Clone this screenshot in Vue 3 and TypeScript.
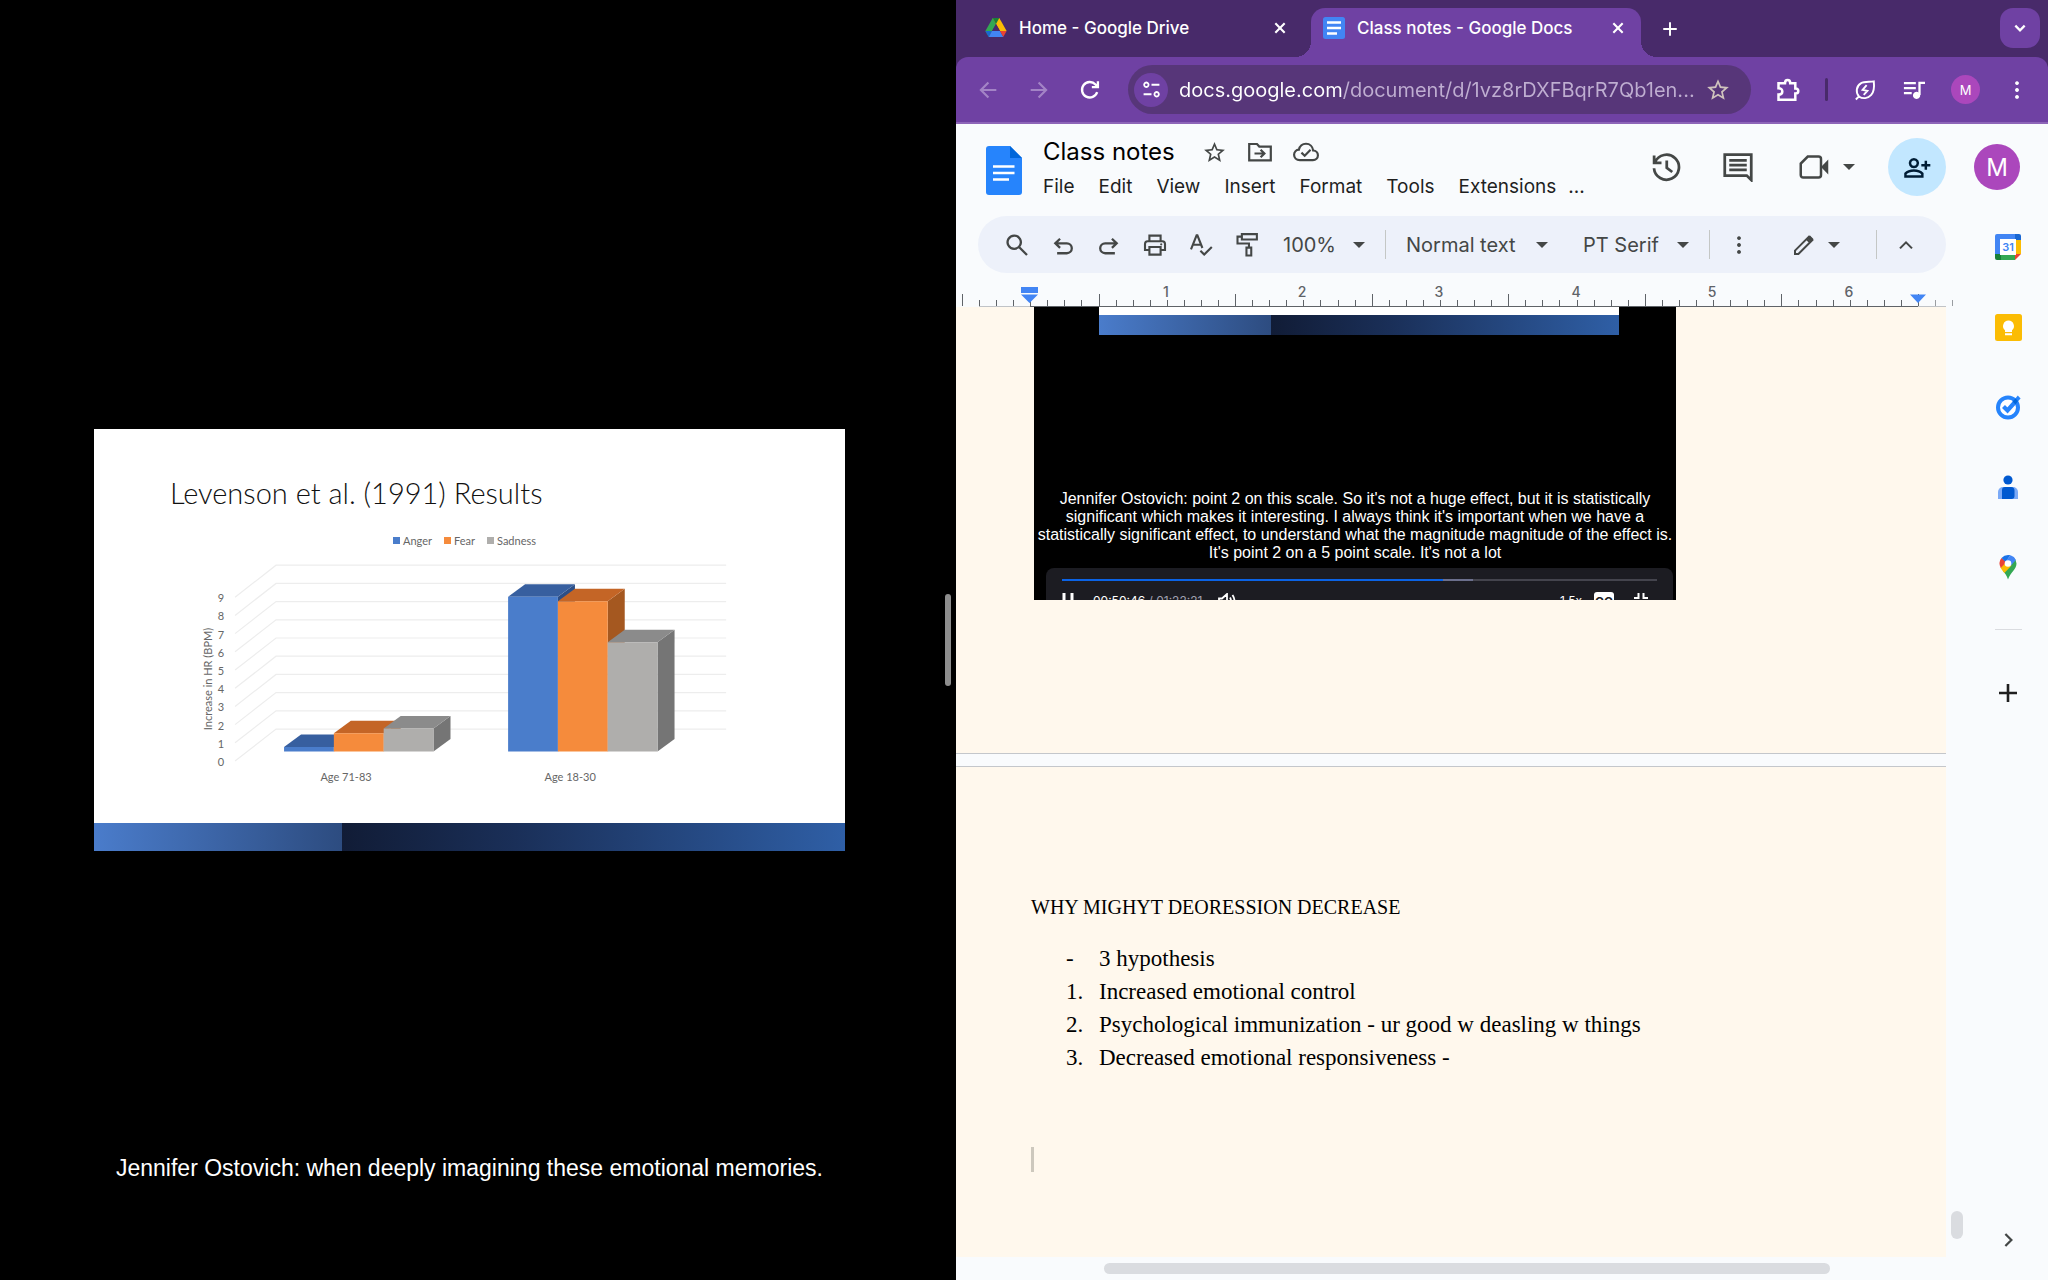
<script setup lang="ts">
import { h } from 'vue'

interface Glyph {
  stroke?: string
  fill?: string
  width?: number
}

const glyphs: Record<string, Glyph> = {
  close: { stroke: 'M4 4 20 20M20 4 4 20', width: 3.6 },
  plus: { stroke: 'M12 3V21M3 12H21', width: 2.6 },
  chevronDown: { stroke: 'M5 8.5 12 15.5 19 8.5', width: 3.4 },
  chevronUp: { stroke: 'M4 16.5 12 8.5 20 16.5', width: 2.8 },
  chevronRight: { stroke: 'M8.5 4 16.5 12 8.5 20', width: 3 },
  back: { stroke: 'M22 12H4M12.5 3 3.5 12l9 9', width: 2.6 },
  forward: { stroke: 'M2 12H20M11.5 3 20.5 12l-9 9', width: 2.6 },
  reload: { stroke: 'M20.6 14.5A9.3 9.3 0 1 1 18.6 5.4L21 8M21.5 1.5V8.6H14.2', width: 2.8 },
  tune: {
    stroke: 'M12 6H22M2 18H12M5.5 3.2a2.8 2.8 0 1 0 .01 0zM18.5 15.2a2.8 2.8 0 1 0 .01 0z',
    width: 2.3,
  },
  star: {
    fill: 'M22 9.24l-7.19-.62L12 2 9.19 8.63 2 9.24l5.46 4.73L5.82 21 12 17.27 18.18 21l-1.63-7.03L22 9.24zM12 15.4l-3.76 2.27 1-4.28-3.32-2.88 4.38-.38L12 6.1l1.71 4.04 4.38.38-3.32 2.88 1 4.28L12 15.4z',
  },
  puzzle: {
    stroke:
      'M2.5 5.2H9C9 .9 14.2 .9 14.2 5.2H19.3V10.4C23.3 10.4 23.3 15.6 19.3 15.6V21.8H2.5V16.6C7.6 16.6 7.6 10.2 2.5 10.2Z',
    width: 2.5,
  },
  leaf: {
    stroke:
      'M2 22.3 5.4 19C1.4 14.6 2.6 7.6 7.4 4.7 11.4 2.3 16.4 3.4 21.6 2.6 22.2 8 22.4 13.4 18.8 17.4 15.2 21.4 9.6 22 5.4 19M13.8 6.8 9.4 11.8 14.6 13 10.6 17.4',
    width: 2.1,
  },
  queue: {
    stroke: 'M1 4.5H14M1 10H14M1 15.5H9.5M18 17.5V4.2H24',
    fill: 'M14.8 14a3.9 3.9 0 1 0 .01 0z',
    width: 2.5,
  },
  dots: { fill: 'M12 1.4a2.3 2.3 0 1 0 .01 0zM12 9.7a2.3 2.3 0 1 0 .01 0zM12 18a2.3 2.3 0 1 0 .01 0z' },
  folder: { stroke: 'M1.2 4H9L11.3 6.6H22.8V20.4H1.2ZM6.5 13.5H16M12.6 9.8 16.4 13.5 12.6 17.2', width: 2.2 },
  cloud: {
    stroke:
      'M6.4 19.5C2.9 19.5 1 17.2 1 14.6 1 12 3 10 5.5 9.8 6.3 6.4 8.8 4.4 12 4.4 15.6 4.4 18.2 7 18.6 10.6 21.2 10.8 23 12.7 23 15 23 17.6 21 19.5 18.4 19.5ZM7.8 12.6 10.8 15.5 16.2 10',
    width: 2,
  },
  history: { stroke: 'M2.5 2.8V8.6H8.4M3.2 8.2A10 10 0 1 1 2.4 13M12.6 6.8V12.6L17 16', width: 2.2 },
  comment: { stroke: 'M1.4 2H22.6V22.4L19 18.9H1.4ZM5 6.6H19M5 10.4H19M5 14.2H19', width: 2.2 },
  video: {
    stroke: 'M7 3.6H15.6C16.8 3.6 17.6 4.4 17.6 5.6V18.4C17.6 19.6 16.8 20.4 15.6 20.4H3.4C2.2 20.4 1.4 19.6 1.4 18.4V9.2Z',
    fill: 'M17.6 12 23.4 6V18Z',
    width: 2,
  },
  personAdd: {
    stroke: 'M8.8 4.6a3.5 3.5 0 1 0 .01 0zM1.3 20V17.4C3 15.4 6 14.6 8.8 14.6 11.6 14.6 14.6 15.4 16.3 17.4V20ZM19.4 6V14M15.4 10H23.4',
    width: 2.2,
  },
  search: { stroke: 'M9.2 2.6a6.6 6.6 0 1 0 .01 0zM14 14 22 22', width: 2.3 },
  undo: { stroke: 'M8.8 5.2 3.6 10.2 8.8 15.2M4 10.2H16.2A5.4 5.4 0 0 1 16.2 21H5.6', width: 2.5 },
  redo: { stroke: 'M15.2 5.2 20.4 10.2 15.2 15.2M20 10.2H7.8A5.4 5.4 0 0 0 7.8 21H18.4', width: 2.5 },
  print: {
    stroke: 'M6.4 8V2.6H17.6V8M6.4 17H2V11C2 9.3 3 8.2 4.6 8.2H19.4C21 8.2 22 9.3 22 11V17H17.6M6.4 14H17.6V21.6H6.4Z',
    fill: 'M18.2 10.2a1.1 1.1 0 1 0 .01 0z',
    width: 2.1,
  },
  spell: { stroke: 'M2 16.4 7.6 2.4H8.4L13.4 15M4.2 11.8H11.8M11.4 17.8 15.2 21.6 22.8 14', width: 2.1 },
  paint: { stroke: 'M6.6 2H21V7.2H6.6ZM6.6 4.4H2.4V11H13.4V15M11 15H15.6V22.6H11Z', width: 2 },
  pencil: { stroke: 'M3 21V17.6L17 3.6 20.4 7 6.4 21ZM14.6 6 18 9.4', fill: 'M15 5.6 18 2.6 21.4 6 18.4 9Z', width: 2 },
}

const Icon = (props: { name: string; size?: number }) => {
  const g = glyphs[props.name]
  const size = props.size ?? 24
  const parts = []
  if (g.stroke) {
    parts.push(h('path', { d: g.stroke, fill: 'none', stroke: 'currentColor', 'stroke-width': g.width }))
  }
  if (g.fill) parts.push(h('path', { d: g.fill, fill: 'currentColor' }))
  return h('svg', { viewBox: '0 0 24 24', width: size, height: size, 'aria-hidden': 'true' }, parts)
}
Icon.props = ['name', 'size']

const Caret = () =>
  h('svg', { viewBox: '0 0 12 6', width: 12, height: 6, 'aria-hidden': 'true' }, [
    h('path', { d: 'M0 0H12L6 6Z', fill: 'currentColor' }),
  ])

const menus = ['File', 'Edit', 'View', 'Insert', 'Format', 'Tools', 'Extensions']
const tools = [
  { icon: 'search', label: 'Search the menus', size: 24 },
  { icon: 'undo', label: 'Undo', size: 22 },
  { icon: 'redo', label: 'Redo', size: 22 },
  { icon: 'print', label: 'Print', size: 24 },
  { icon: 'spell', label: 'Spelling and grammar check', size: 24 },
  { icon: 'paint', label: 'Paint format', size: 25 },
]

// Ruler: eight ticks to the inch, a tall one at each half inch.
const eighth = 17.07
const ticks = Array.from({ length: 59 }, (_, i) => ({
  x: Math.round(6 + i * eighth),
  tall: i % 8 === 0,
  faint: i > 56,
}))
const inches = [1, 2, 3, 4, 5, 6].map((n) => ({ n, x: Math.round(5 + (n * 8 + 4) * eighth) }))

// Bar chart
const series = [
  { name: 'Anger', front: '#4a7dcb', top: '#375f9f', side: '#2c4e86' },
  { name: 'Fear', front: '#f58b3c', top: '#c46526', side: '#a55820' },
  { name: 'Sadness', front: '#afaeac', top: '#8b8b8b', side: '#757575' },
]
const groups = [
  { label: 'Age 71-83', x: 190, values: [0.25, 1, 1.26] },
  { label: 'Age 18-30', x: 414, values: [8.5, 8.25, 6] },
]
const unit = 18.2
const barWidth = 49.8
const base = 198.5
const depth = { x: 17, y: 12.5 }
const levels = [9, 8, 7, 6, 5, 4, 3, 2, 1, 0].map((value) => ({ value, y: 176 - value * unit }))
const bars = groups.flatMap((g) =>
  g.values.map((v, i) => {
    const x = g.x + i * barWidth
    const y = base - v * unit
    const r = x + barWidth
    return {
      ...series[i],
      frontPath: `M${x} ${y}H${r}V${base}H${x}Z`,
      topPath: `M${x} ${y}l${depth.x} ${-depth.y}h${barWidth}L${r} ${y}Z`,
      sidePath: `M${r} ${y}l${depth.x} ${-depth.y}V${base - depth.y}L${r} ${base}Z`,
    }
  }),
)

const notes = [
  { mark: '-', text: '3 hypothesis' },
  { mark: '1.', text: 'Increased emotional control' },
  { mark: '2.', text: 'Psychological immunization - ur good w deasling w things' },
  { mark: '3.', text: 'Decreased emotional responsiveness -' },
]
</script>

<template>
  <div class="screen">
    <section class="lecture" aria-label="Lecture video">
      <div class="stage">
        <article class="slide">
          <h1>Levenson et al. (1991) Results</h1>
          <ul class="legend">
            <li v-for="s in series" :key="s.name">
              <i :style="{ background: s.front }"></i>{{ s.name }}
            </li>
          </ul>
          <svg class="chart" viewBox="0 0 751 270" role="img" aria-label="Increase in heart rate by age group">
            <path
              v-for="l in levels"
              :key="l.value"
              :d="`M141 ${l.y + 32}L182 ${l.y}H632`"
              fill="none"
              stroke="#ededed"
              stroke-width="1.2"
            />
            <text v-for="l in levels" :key="'t' + l.value" x="127" :y="l.y + 37" text-anchor="middle">{{ l.value }}</text>
            <text class="axis" transform="translate(118 126) rotate(-90)" text-anchor="middle">Increase in HR (BPM)</text>
            <g v-for="(b, i) in bars" :key="i">
              <path :d="b.sidePath" :fill="b.side" />
              <path :d="b.topPath" :fill="b.top" />
              <path :d="b.frontPath" :fill="b.front" />
            </g>
            <text v-for="g in groups" :key="g.label" :x="g.x + 62" y="228" text-anchor="middle">{{ g.label }}</text>
          </svg>
          <div class="band"></div>
        </article>
        <p class="subtitle">Jennifer Ostovich: when deeply imagining these emotional memories.</p>
      </div>
      <div class="splitter"><span></span></div>
    </section>

    <section class="browser">
      <div class="tabs">
        <div class="tab">
          <svg viewBox="0 0 24 22" width="22" height="20" aria-hidden="true">
            <path d="M8.4 0H15.6L12 6.4Z" fill="#188038" />
            <path d="M8.4 0 .3 14.4 4 21 12 6.6Z" fill="#34a853" />
            <path d="M15.6 0 23.7 14.4H16.4L8.4 0Z" fill="#fbbc04" />
            <path d="M8.4 0 12 6.6 15.6 0Z" fill="#188038" />
            <path d="M.3 14.4H7.6L4 21Z" fill="#1967d2" />
            <path d="M7.6 14.4H16.4L20 21H4Z" fill="#4285f4" />
            <path d="M16.4 14.4H23.7L20 21Z" fill="#ea4335" />
            <path d="M12 6.6 16.4 14.4H7.6Z" fill="#482a6a" />
          </svg>
          <span class="tab-name">Home - Google Drive</span>
          <button aria-label="Close tab"><Icon name="close" :size="14" /></button>
        </div>
        <div class="tab active">
          <svg viewBox="0 0 22 22" width="22" height="22" aria-hidden="true">
            <rect width="22" height="22" rx="2.5" fill="#4285f4" />
            <path d="M4 5.5H18M4 11H18M4 16.5H14" stroke="#fff" stroke-width="2.6" />
          </svg>
          <span class="tab-name">Class notes - Google Docs</span>
          <button aria-label="Close tab"><Icon name="close" :size="14" /></button>
        </div>
        <button class="new-tab" aria-label="New tab"><Icon name="plus" :size="18" /></button>
        <button class="tab-search" aria-label="Search tabs"><Icon name="chevronDown" :size="16" /></button>
      </div>

      <div class="nav">
        <button class="dim" aria-label="Back"><Icon name="back" :size="20" /></button>
        <button class="dim" aria-label="Forward"><Icon name="forward" :size="20" /></button>
        <button aria-label="Reload"><Icon name="reload" :size="20" /></button>
        <div class="omnibox">
          <button class="site-info" aria-label="Site information"><Icon name="tune" :size="19" /></button>
          <input type="text" aria-label="Address" value="docs.google.com/document/d/1vz8rDXFBqrR7Qb1en..." />
          <button class="bookmark" aria-label="Bookmark this tab"><Icon name="star" :size="26" /></button>
        </div>
        <button class="action" aria-label="Extensions"><Icon name="puzzle" /></button>
        <span class="nav-rule"></span>
        <button class="action" aria-label="Energy saver"><Icon name="leaf" :size="22" /></button>
        <button class="action" aria-label="Media controls"><Icon name="queue" :size="22" /></button>
        <button class="profile" aria-label="Profile">M</button>
        <button class="action" aria-label="More"><Icon name="dots" :size="20" /></button>
      </div>

      <div class="docs">
        <header class="docs-head">
          <a href="#" class="logo" aria-label="Docs home">
            <svg viewBox="0 0 36 49" width="36" height="49">
              <path d="M3 0H24L36 12V46a3 3 0 0 1-3 3H3a3 3 0 0 1-3-3V3a3 3 0 0 1 3-3Z" fill="#2684fc" />
              <path d="M24 0 36 12H24Z" fill="#0066da" />
              <path d="M7 20.5H28.5M7 27H28.5M7 33.5H23" stroke="#fff" stroke-width="2.6" />
            </svg>
          </a>
          <div class="head-main">
            <div class="title-row">
              <input class="doc-title" type="text" aria-label="Document title" value="Class notes" />
              <button aria-label="Star"><Icon name="star" :size="25" /></button>
              <button aria-label="Move"><Icon name="folder" :size="24" /></button>
              <button aria-label="Document status"><Icon name="cloud" :size="26" /></button>
            </div>
            <nav class="menus">
              <button v-for="m in menus" :key="m">{{ m }}</button>
              <button class="more">...</button>
            </nav>
          </div>
          <div class="head-actions">
            <button aria-label="Version history"><Icon name="history" :size="30" /></button>
            <button aria-label="Comments"><Icon name="comment" :size="30" /></button>
            <button class="meet" aria-label="Join a call"><Icon name="video" :size="30" /><Caret /></button>
            <button class="share" aria-label="Share"><Icon name="personAdd" :size="27" /></button>
            <button class="account" aria-label="Account">M</button>
          </div>
        </header>

        <div class="workspace">
          <div class="editor">
            <div class="toolbar" role="toolbar">
              <button v-for="t in tools" :key="t.icon" class="tool" :aria-label="t.label">
                <Icon :name="t.icon" :size="t.size" />
              </button>
              <label class="drop zoom"><select aria-label="Zoom"><option>100%</option></select><Caret /></label>
              <span class="rule"></span>
              <label class="drop para"><select aria-label="Styles"><option>Normal text</option></select><Caret /></label>
              <label class="drop font"><select aria-label="Font"><option>PT Serif</option></select><Caret /></label>
              <span class="rule"></span>
              <button class="slim" aria-label="More tools"><Icon name="dots" :size="20" /></button>
              <button class="mode" aria-label="Editing mode"><Icon name="pencil" :size="24" /><Caret /></button>
              <span class="rule"></span>
              <button class="slim" aria-label="Hide the menus"><Icon name="chevronUp" :size="18" /></button>
            </div>

            <svg class="ruler" width="100%" height="34" aria-hidden="true">
              <path d="M23 33.5H990" stroke="#c0c3c7" />
              <path d="M74 33.5H962" stroke="#5f6368" />
              <rect
                v-for="t in ticks"
                :key="t.x"
                :x="t.x"
                :y="t.tall ? 21 : 27"
                width="1"
                :height="t.tall ? 12 : 6"
                :fill="t.faint ? '#9a9da1' : '#5f6368'"
              />
              <text v-for="i in inches" :key="i.n" :x="i.x" y="24" text-anchor="middle">{{ i.n }}</text>
              <path d="M65 14H82V20H65ZM65 21.5H82L73.5 30ZM954 21.5H970L962 30Z" fill="#4285f4" />
            </svg>

            <div class="canvas">
              <div class="pages">
                <div class="page first">
                  <figure>
                    <div class="clip-slide"><div class="band"></div></div>
                    <figcaption>
                      Jennifer Ostovich: point 2 on this scale. So it's not a huge effect, but it is statistically<br />
                      significant which makes it interesting. I always think it's important when we have a<br />
                      statistically significant effect, to understand what the magnitude magnitude of the effect is.<br />
                      It's point 2 on a 5 point scale. It's not a lot
                    </figcaption>
                    <div class="player">
                      <div class="progress"><span class="played"></span><span class="loaded"></span></div>
                      <div class="controls">
                        <svg viewBox="0 0 12 16" width="12" height="16"><path d="M2 0V16M10 0V16" stroke="#fff" stroke-width="3" /></svg>
                        <span class="time">00:50:46 <em>/ 01:22:21</em></span>
                        <svg class="volume" viewBox="0 0 18 16" width="18" height="16">
                          <path d="M1 5.5H4L9 1V15L4 10.5H1ZM12 4.5Q14 8 12 11.5M14.5 2Q18.5 8 14.5 14" fill="none" stroke="#fff" stroke-width="1.8" />
                        </svg>
                        <span class="speed">1.5x</span>
                        <span class="cc">CC</span>
                        <svg viewBox="0 0 14 16" width="14" height="16"><path d="M0 5H4.5V0M14 5H9.5V0M0 11H4.5V16M14 11H9.5V16" fill="none" stroke="#fff" stroke-width="2" /></svg>
                      </div>
                    </div>
                  </figure>
                </div>
                <div class="page second">
                  <p>WHY MIGHYT DEORESSION DECREASE</p>
                  <ul>
                    <li v-for="n in notes" :key="n.mark"><span>{{ n.mark }}</span>{{ n.text }}</li>
                  </ul>
                  <div class="cursor"></div>
                </div>
              </div>
              <div class="track-y"><span></span></div>
            </div>
            <div class="track-x"><span></span></div>
          </div>

          <aside class="rail">
            <button aria-label="Calendar">
              <svg viewBox="0 0 26 26" width="26" height="26">
                <path d="M2 0H20V6H6V20H0V2A2 2 0 0 1 2 0Z" fill="#4285f4" />
                <path d="M20 0H24A2 2 0 0 1 26 2V6H20Z" fill="#1967d2" />
                <path d="M20 6H26V20H20Z" fill="#fbbc04" />
                <path d="M6 20H20V26H6Z" fill="#34a853" />
                <path d="M0 20H6V26H2A2 2 0 0 1 0 24Z" fill="#188038" />
                <path d="M20 20H26L20 26Z" fill="#ea4335" />
                <rect x="5" y="5" width="16" height="16" fill="#fff" />
                <text x="13" y="17" text-anchor="middle" class="day">31</text>
              </svg>
            </button>
            <button aria-label="Keep">
              <svg viewBox="0 0 27 27" width="27" height="27">
                <rect width="27" height="27" rx="2.5" fill="#fbbc04" />
                <path d="M13.5 6.5a5.5 5.5 0 0 1 3.5 9.7V18H10V16.2A5.5 5.5 0 0 1 13.5 6.5ZM10 19.2H17V21.2H10Z" fill="#fff" />
              </svg>
            </button>
            <button aria-label="Tasks">
              <svg viewBox="0 0 26 26" width="26" height="26">
                <circle cx="13" cy="13.5" r="10" fill="#fff" stroke="#2684fc" stroke-width="4" />
                <path d="M8.5 12.5 12.5 16.5 20.5 7.5" fill="none" stroke="#2684fc" stroke-width="4.2" />
                <path d="M18.6 6.6 21 9.4 25.6 4.4 22.8 1.6Z" fill="#2684fc" />
                <path d="M17.5 7.5 20.5 4.5 23 7 20.5 10.5Z" fill="#0066da" />
              </svg>
            </button>
            <button aria-label="Contacts">
              <svg viewBox="0 0 26 26" width="26" height="26">
                <circle cx="13" cy="6" r="4.6" fill="#0059d0" />
                <path d="M8 13H18A5 5 0 0 1 23 18V25H3V18A5 5 0 0 1 8 13Z" fill="#7baaf7" />
                <path d="M10 13H16A3.5 3.5 0 0 1 19.5 16.5V22A3 3 0 0 1 16.5 25H7V16A3 3 0 0 1 10 13Z" fill="#0059d0" />
              </svg>
            </button>
            <button aria-label="Maps">
              <svg viewBox="0 0 26 26" width="26" height="26">
                <path d="M21.5 9.5C21.5 15.5 15.5 18 13 25.5 11.8 21.5 9.800 19.200 8 17L19 4Q21.5 6 21.5 9.5Z" fill="#34a853" />
                <path d="M5.6 13.8 12 6.5 16.5 11.5 9.4 19Q7 16.6 5.6 13.8Z" fill="#fbbc04" />
                <path d="M6.5 4 11.5 8 5.7 14Q3 8 6.5 4Z" fill="#ea4335" />
                <path d="M6.5 4Q10 0 15.5 1.2L10.5 8Z" fill="#1a73e8" />
                <path d="M15.5 1.2Q19.5 2.5 20.9 6L15.5 12 10.5 7.5Z" fill="#4285f4" />
                <circle cx="13" cy="9.5" r="3.3" fill="#fff" />
              </svg>
            </button>
            <hr />
            <button class="add" aria-label="Get add-ons"><Icon name="plus" :size="24" /></button>
            <button class="hide" aria-label="Hide side panel"><Icon name="chevronRight" :size="18" /></button>
          </aside>
        </div>
      </div>
    </section>
  </div>
</template>

<style>
html,
body {
  margin: 0;
}
</style>

<style scoped>
* {
  box-sizing: border-box;
}
.screen {
  display: grid;
  grid-template-columns: 956fr 1092fr;
  height: 100vh;
  overflow: hidden;
  background: #000;
  font-family: Inter, Roboto, sans-serif;
}
button,
input,
select {
  border: 0;
  padding: 0;
  margin: 0;
  background: none;
  color: inherit;
  font: inherit;
}
button {
  display: flex;
  align-items: center;
  justify-content: center;
  flex: none;
}
svg {
  display: block;
  flex: none;
}
p,
h1,
ul,
figure {
  margin: 0;
  padding: 0;
}

/* Lecture */
.lecture {
  display: flex;
  min-width: 0;
}
.stage {
  flex: 1;
  min-width: 0;
  display: grid;
  grid-template-rows: 1fr auto 1fr;
  justify-items: center;
}
.slide {
  grid-row: 2;
  width: 80%;
  background: #fff;
  font-family: Lato, sans-serif;
}
.slide h1 {
  padding: 44px 76px 0;
  font-weight: 300;
  font-size: 29px;
  line-height: 40px;
  color: #111;
}
.legend {
  display: flex;
  justify-content: center;
  gap: 12px;
  height: 40px;
  padding: 20px 10px 0 0;
  list-style: none;
  font-size: 11px;
  line-height: 16px;
  color: #666;
}
.legend li {
  display: flex;
  align-items: center;
  gap: 3px;
  height: 16px;
}
.legend i {
  width: 7px;
  height: 7px;
}
.chart {
  width: 100%;
  height: auto;
  font-size: 11px;
  fill: #666;
}
.band {
  height: 28px;
  background: linear-gradient(90deg, #4a7ccb, #2d4c80 33%, #111c36 33%, #1a2f58 56%, #2f5fa6);
}
.subtitle {
  grid-row: 3;
  align-self: end;
  padding-bottom: 98px;
  font-family: "Liberation Sans", sans-serif;
  font-size: 23px;
  line-height: 28px;
  color: #fff;
  white-space: nowrap;
}
.splitter {
  width: 17px;
  display: flex;
  align-items: center;
  justify-content: center;
}
.splitter span {
  width: 6px;
  height: 92px;
  border-radius: 3px;
  background: #8e8e8e;
}

/* Browser chrome */
.browser {
  display: flex;
  flex-direction: column;
  min-width: 0;
  background: #482a6a;
  color: #fff;
}
.tabs {
  display: flex;
  height: 57px;
  padding-top: 8px;
}
.tab {
  display: flex;
  align-items: center;
  width: 355px;
  height: 49px;
  padding: 0 24px 9px 29px;
  font-size: 17px;
  line-height: 20px;
  font-weight: 500;
}
.tab-name {
  flex: 1;
  padding-left: 12px;
  white-space: nowrap;
}
.tab.active {
  position: relative;
  width: 330px;
  padding: 0 16px 9px 12px;
  border-radius: 14px 14px 0 0;
  background: #6f41a3;
}
.tab.active::before,
.tab.active::after {
  content: "";
  position: absolute;
  bottom: 0;
  width: 16px;
  height: 16px;
}
.tab.active::before {
  left: -16px;
  background: radial-gradient(circle at 0 0, transparent 16px, #6f41a3 16px);
}
.tab.active::after {
  right: -16px;
  background: radial-gradient(circle at 100% 0, transparent 16px, #6f41a3 16px);
}
.new-tab {
  width: 22px;
  height: 41px;
  margin-left: 18px;
}
.tab-search {
  width: 40px;
  height: 40px;
  margin: 0 8px 0 auto;
  border-radius: 13px;
  background: #6f41a3;
}
.nav {
  display: flex;
  align-items: center;
  gap: 25px;
  height: 67px;
  padding: 0 19px;
  border-bottom: 2px solid #8d65b8;
  border-radius: 12px 12px 0 0;
  background: #6f41a3;
}
.nav > button {
  width: 26px;
  height: 30px;
}
.nav > .action {
  width: 24px;
}
.nav > .dim {
  color: #a384c6;
}
.omnibox {
  flex: 1;
  min-width: 0;
  display: flex;
  align-items: center;
  height: 49px;
  padding: 0 20px 0 6px;
  border-radius: 25px;
  background: #573679;
}
.site-info {
  width: 34px;
  height: 34px;
  border-radius: 50%;
  background: #6f41a3;
}
.omnibox input {
  flex: 1;
  min-width: 0;
  margin-left: 11px;
  font-size: 20px;
  line-height: 30px;
  color: transparent;
  background: linear-gradient(90deg, #fff 163px, #bfaed1 163px);
  background-clip: text;
}
.bookmark {
  color: #cfc3bd;
}
.nav-rule {
  width: 3px;
  height: 23px;
  border-radius: 2px;
  background: #482a6a;
}
.nav > .profile {
  width: 29px;
  height: 29px;
  border-radius: 50%;
  background: #ab47bc;
  font-size: 13px;
}

/* Docs header */
.docs {
  flex: 1;
  min-height: 0;
  display: flex;
  flex-direction: column;
  background: #f9fbfd;
  color: #444746;
}
.docs-head {
  display: flex;
  align-items: center;
  height: 92px;
  padding: 0 28px 0 30px;
}
.head-main {
  flex: 1;
  padding-left: 21px;
}
.title-row {
  display: flex;
  align-items: center;
  height: 32px;
}
.doc-title {
  width: 148px;
  font-size: 24px;
  line-height: 32px;
  color: #000;
}
.title-row button {
  width: 46px;
}
.menus {
  display: flex;
  gap: 24px;
  height: 36px;
  font-size: 19px;
  color: #1f1f1f;
}
.menus .more {
  margin-left: -12px;
}
.head-actions {
  display: flex;
  align-items: center;
  align-self: flex-start;
  height: 58px;
  margin-top: 14px;
}
.head-actions > button {
  margin-left: 42px;
}
.head-actions .meet {
  gap: 14px;
  margin-left: 46px;
}
.head-actions .share {
  width: 58px;
  height: 58px;
  margin-left: 33px;
  border-radius: 50%;
  background: #c2e7ff;
  color: #001d35;
}
.head-actions .account {
  width: 46px;
  height: 46px;
  margin-left: 28px;
  border-radius: 50%;
  background: #ab47bc;
  color: #fff;
  font-size: 24px;
}

/* Editor */
.workspace {
  flex: 1;
  min-height: 0;
  display: flex;
}
.editor {
  flex: 1;
  min-width: 0;
  display: flex;
  flex-direction: column;
}
.toolbar {
  display: flex;
  align-items: center;
  height: 57px;
  margin: 0 22px;
  padding: 0 31px 0 16px;
  border-radius: 29px;
  background: #edf1fa;
  font-size: 20px;
}
.tool {
  width: 46px;
  height: 40px;
}
.drop {
  display: flex;
  align-items: center;
  justify-content: space-between;
  flex: none;
}
.drop select {
  appearance: none;
}
.drop.zoom {
  width: 82px;
  margin-left: 13px;
}
.drop.para {
  width: 142px;
}
.drop.font {
  width: 106px;
  margin-left: 35px;
}
.rule {
  width: 1px;
  height: 29px;
  margin: 0 20px;
  background: #c4c7c5;
}
.slim {
  width: 18px;
  height: 40px;
}
.mode {
  gap: 12px;
  height: 40px;
  margin: 0 16px 0 auto;
}
.ruler text {
  font-size: 14px;
  font-weight: 500;
  fill: #5f6368;
}
.canvas {
  flex: 1;
  min-height: 0;
  display: flex;
}
.pages {
  flex: 1;
  min-width: 0;
  display: flex;
  flex-direction: column;
}
.page {
  background: #fff8ed;
}
.first {
  height: 447px;
  padding-left: 78px;
  border-bottom: 1px solid #c4c7cb;
}
.second {
  flex: 1;
  margin-top: 12px;
  padding: 124px 75px 0;
  border-top: 1px solid #c4c7cb;
  font-family: "Liberation Serif", serif;
  font-size: 23px;
  line-height: 33px;
  color: #000;
}
.second p {
  font-size: 20px;
}
.second ul {
  margin-top: 18px;
  padding-left: 35px;
  list-style: none;
}
.second li {
  display: flex;
}
.second li span {
  width: 33px;
}
.cursor {
  width: 3px;
  height: 25px;
  margin-top: 73px;
  background: #cdc8bd;
}
figure {
  width: 642px;
  height: 293px;
  overflow: hidden;
  background: #000;
  color: #fff;
}
.clip-slide {
  width: 520px;
  margin-left: 65px;
  padding-top: 8px;
  background: #fff;
}
.clip-slide .band {
  height: 20px;
}
figcaption {
  margin-top: 155px;
  text-align: center;
  font-family: "Liberation Sans", sans-serif;
  font-size: 16px;
  line-height: 18px;
  white-space: nowrap;
}
.player {
  height: 60px;
  margin: 6px 3px 0 12px;
  padding: 11px 16px 0;
  border-radius: 8px 8px 0 0;
  background: #1c1c22;
}
.progress {
  display: flex;
  height: 2px;
  background: #44444d;
}
.played {
  width: 64%;
  background: #0b63e5;
}
.loaded {
  width: 5%;
  background: #6b6f8c;
}
.controls {
  display: flex;
  align-items: center;
  height: 20px;
  margin-top: 10px;
  font-size: 12px;
  line-height: 20px;
}
.time {
  margin-left: 19px;
}
.time em {
  font-style: normal;
  color: #a0a0b0;
}
.volume {
  margin-left: 16px;
}
.speed {
  margin-left: auto;
}
.cc {
  width: 20px;
  height: 18px;
  margin: 0 20px 0 12px;
  border-radius: 3px;
  background: #fff;
  color: #1c1c22;
  text-align: center;
  font-weight: 700;
}
.controls svg:last-child {
  margin-right: 9px;
}
.track-y {
  display: flex;
  align-items: flex-end;
  width: 22px;
  padding: 0 5px 18px;
}
.track-y span {
  width: 12px;
  height: 28px;
  border-radius: 6px;
  background: #dadce0;
}
.track-x {
  height: 23px;
  padding: 6px 138px 0 148px;
}
.track-x span {
  display: block;
  height: 11px;
  border-radius: 6px;
  background: #dadce0;
}

/* Side rail */
.rail {
  display: flex;
  flex-direction: column;
  align-items: center;
  width: 80px;
  padding: 11px 0 20px;
}
.rail button {
  width: 40px;
  height: 40px;
  margin-bottom: 40px;
}
.day {
  font-size: 11px;
  font-weight: 600;
  fill: #4285f4;
}
.rail hr {
  width: 27px;
  height: 1px;
  margin: 2px 0 43px;
  border: 0;
  background: #dadce0;
}
.rail .add {
  color: #1f1f1f;
}
.rail .hide {
  margin: auto 0 0;
}
</style>
